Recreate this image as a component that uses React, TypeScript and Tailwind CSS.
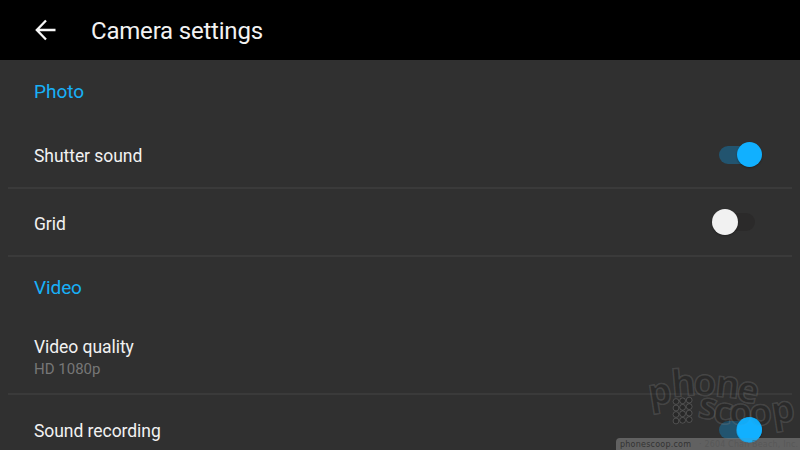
import React from "react";

function Toggle({ on }: { on: boolean }) {
  return (
    <div className={on ? "relative mr-[30px] h-[26px] w-[43px]" : "relative mr-[37px] h-[26px] w-[43px]"}>
      <div
        className={
          on
            ? "absolute left-0 top-1 h-[18px] w-[38px] rounded-full bg-[#22546f]"
            : "absolute left-[6px] top-1 h-[18px] w-[37px] rounded-full bg-[#2b2a2a]"
        }
      />
      <div
        className={
          on
            ? "absolute right-0 top-0 size-[25.5px] rounded-full bg-[#11b0ff] shadow-[0_1px_2px_rgba(0,0,0,0.3)]"
            : "absolute left-0 top-0 size-[25.5px] rounded-full bg-[#f1f1f1] shadow-[0_1px_2px_rgba(0,0,0,0.3)]"
        }
      />
    </div>
  );
}

const letters = [
  { c: "p", x: 650, y: 406, r: -9 },
  { c: "h", x: 672.5, y: 397, r: -5 },
  { c: "o", x: 693, y: 395, r: 2 },
  { c: "n", x: 714.5, y: 396, r: 6 },
  { c: "e", x: 735, y: 400, r: 12 },
  { c: "s", x: 697, y: 417, r: 10 },
  { c: "c", x: 712, y: 422, r: 8 },
  { c: "o", x: 729, y: 425, r: 0 },
  { c: "o", x: 750, y: 426, r: -5 },
  { c: "p", x: 773, y: 424, r: -9 },
];

function Watermark() {
  return (
    <svg className="pointer-events-none absolute inset-0" width="800" height="450" viewBox="0 0 800 450">
      <g
        fontFamily="'Open Sans', sans-serif"
        fontWeight="700"
        fontSize="37"
        fill="#000"
        fillOpacity="0.12"
        stroke="#888"
        strokeOpacity="0.27"
        strokeWidth="1.5"
      >
        {letters.map((l, i) => (
          <text key={i} x={l.x} y={l.y} transform={`rotate(${l.r} ${l.x} ${l.y})`}>
            {l.c}
          </text>
        ))}
      </g>
      <g fill="#000" fillOpacity="0.15" stroke="#888" strokeOpacity="0.38">
        {[0, 1, 2, 3].map((row) =>
          [0, 1, 2].map((col) => (
            <circle key={`${row}-${col}`} cx={676 + col * 6.6} cy={401.5 + row * 6.5 - col * 0.7} r="2.9" />
          ))
        )}
      </g>
      <path d="M616 450V442Q616 438 620 438H800V450Z" fill="#808080" fillOpacity="0.62" />
      <circle cx="749" cy="430" r="12.7" fill="#11b0ff" fillOpacity="0.8" />
      <g fontFamily="'DejaVu Sans', sans-serif" fontSize="8">
        <text x="620" y="447" textLength="71" fill="#333">
          phonescoop.com
        </text>
        <text x="699" y="447" textLength="99" fill="#505050" fillOpacity="0.55">
          · 2604 Chan Beach, Inc.
        </text>
      </g>
    </svg>
  );
}

export default function App() {
  return (
    <div className="relative flex h-[450px] w-[800px] flex-col overflow-hidden bg-[#303030] text-[#f2f2f2] [font-family:Roboto,sans-serif]">
      <header className="flex h-[60px] shrink-0 items-center bg-black pl-[35px]">
        <svg width="22" height="22" viewBox="0 0 22 22" fill="none" stroke="#f7f7f7" strokeWidth="2.3">
          <path d="M11 1.5 1.8 11l9.2 9.5M2 11h18.5" />
        </svg>
        <h1 className="ml-[34px] pt-[2px] text-[24px] leading-[30px] tracking-[-0.2px]">Camera settings</h1>
      </header>
      <main className="flex flex-col">
        <h2 className="flex h-[62px] items-center pl-[34px] pt-[2px] text-[19px] text-[#18b0f8]">Photo</h2>
        <section className="mx-2 flex h-[67px] items-center justify-between border-b-2 border-[#3a3a3a] pl-[26px]">
          <span className="pt-1 text-[17.5px] tracking-[-0.05px]">Shutter sound</span>
          <Toggle on />
        </section>
        <section className="mx-2 flex h-[68px] items-center justify-between border-b-2 border-[#3a3a3a] pl-[26px]">
          <span className="pt-1 text-[17.5px] tracking-[-0.05px]">Grid</span>
          <Toggle on={false} />
        </section>
        <h2 className="flex h-[61px] items-center pl-[34px] pt-[2px] text-[19px] tracking-[-0.1px] text-[#18b0f8]">Video</h2>
        <section className="mx-2 flex h-[77px] flex-col justify-center border-b-2 border-[#3a3a3a] pl-[26px] pt-[2px]">
          <span className="text-[17.5px] leading-6 tracking-[-0.05px]">Video quality</span>
          <span className="text-[15px] leading-5 text-[#777]">HD 1080p</span>
        </section>
        <section className="mx-2 flex h-[69px] items-center justify-between pl-[26px]">
          <span className="pt-1 text-[17.5px] tracking-[-0.05px]">Sound recording</span>
          <Toggle on />
        </section>
      </main>
      <Watermark />
    </div>
  );
}
